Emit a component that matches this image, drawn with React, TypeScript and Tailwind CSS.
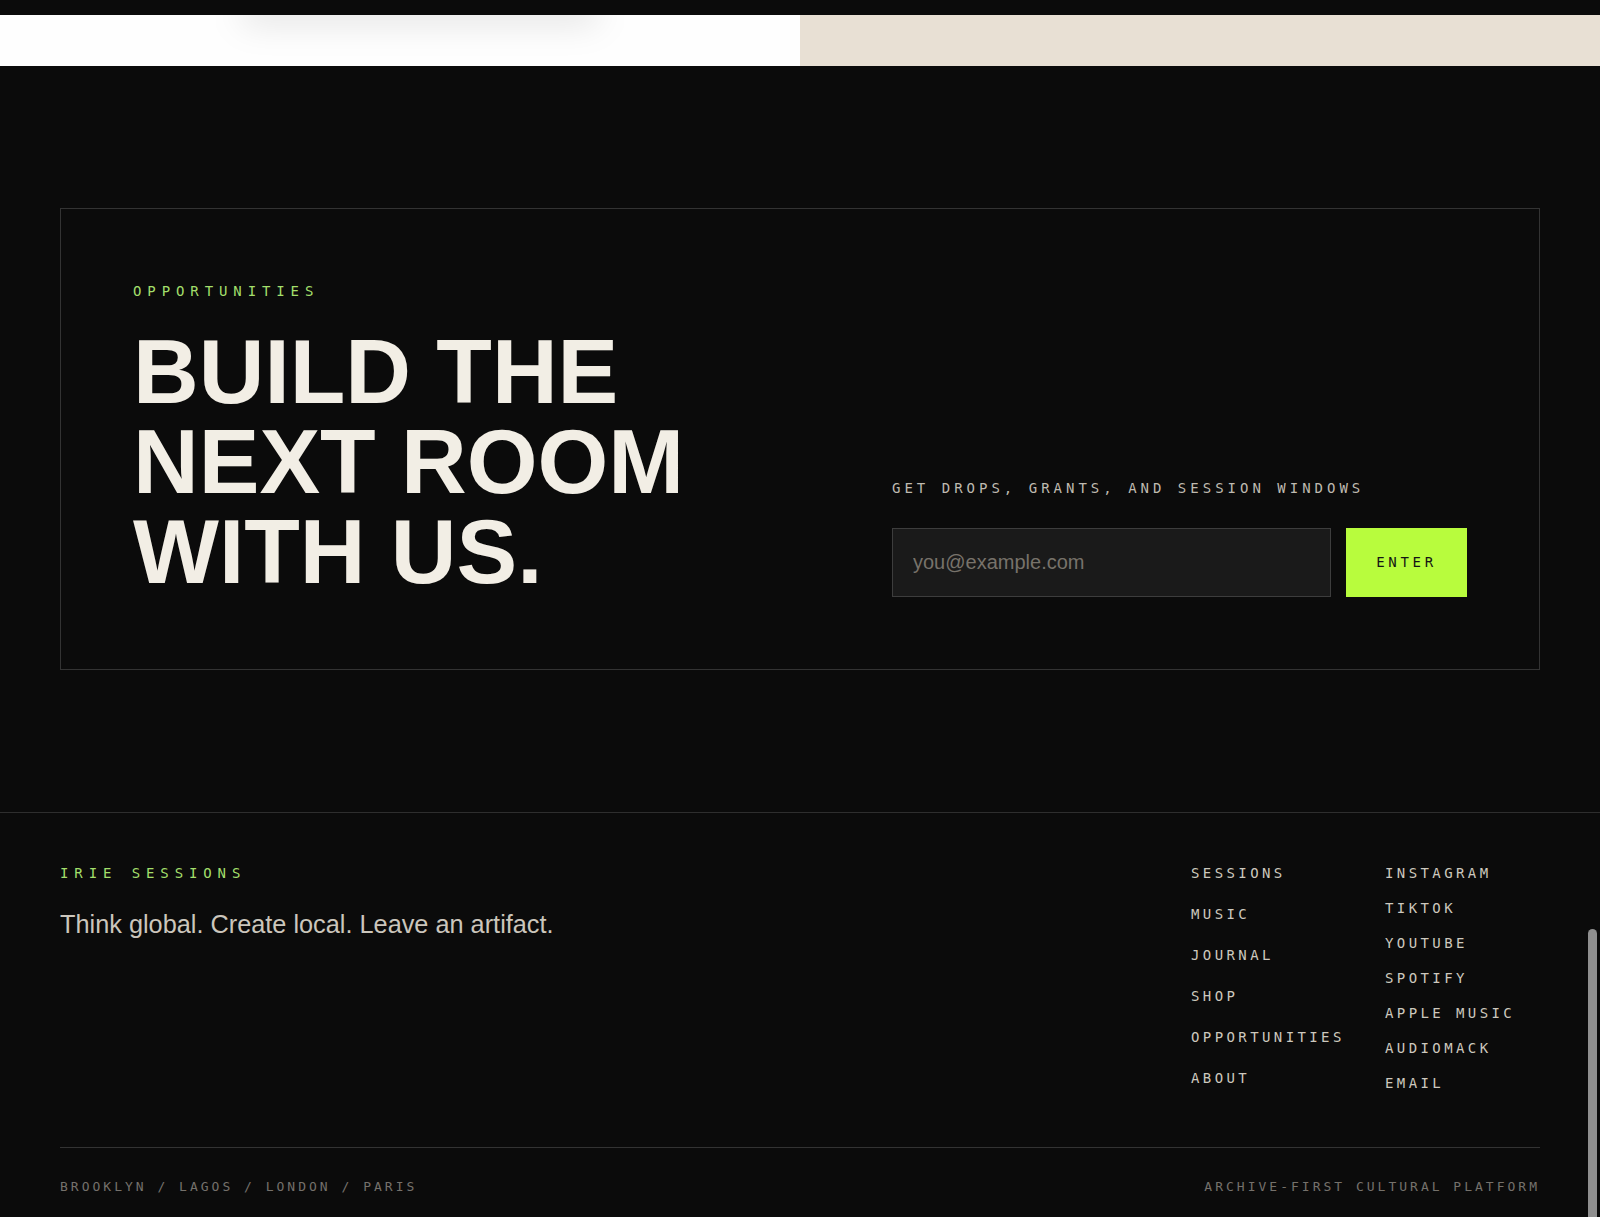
import React from 'react';

const mono = "font-['DejaVu_Sans_Mono','Liberation_Mono',monospace]";
const sans = "font-['Liberation_Sans',Arial,sans-serif]";

const siteLinks = ['Sessions', 'Music', 'Journal', 'Shop', 'Opportunities', 'About'];
const socialLinks = ['Instagram', 'TikTok', 'YouTube', 'Spotify', 'Apple Music', 'Audiomack', 'Email'];

const App: React.FC = () => {
  return (
    <div className={`relative h-[1217px] overflow-hidden bg-[#0b0b0b] ${sans}`}>
      {/* tail of the previous section */}
      <div className="h-[15px] bg-[#0b0b0b]" />
      <div className="grid grid-cols-2 h-[51px]">
        <div className="relative overflow-hidden bg-[#fefefe]">
          <div className="absolute left-[240px] top-[-16px] h-[26px] w-[360px] rounded-full bg-black/10 blur-lg" />
        </div>
        <div className="bg-[#e8e0d4]" />
      </div>

      {/* opportunities / newsletter */}
      <section className="px-[60px] py-[142px]">
        <div className="h-[462px] border border-[#333] px-[72px] py-[72px]">
          <div className="grid h-full grid-cols-[1fr_575px] items-end">
            <div className="self-start">
              <p className={`${mono} text-[14px] leading-[20px] tracking-[5.9px] text-[#a3df6b] uppercase`}>
                Opportunities
              </p>
              <h2 className="mt-[26px] text-[91px] font-bold leading-[90px] text-[#f2eee5] uppercase">
                Build the
                <br />
                next room
                <br />
                with us.
              </h2>
            </div>

            <div>
              <p className={`${mono} mb-[30px] text-[14px] leading-[20px] tracking-[4px] text-[#bfbab0] uppercase`}>
                Get drops, grants, and session windows
              </p>
              <form className="flex gap-[15px]" onSubmit={(e) => e.preventDefault()}>
                <input
                  type="email"
                  placeholder="you@example.com"
                  className="h-[69px] min-w-0 flex-1 border border-[#3d3d3d] bg-[#1a1a1a] px-[20px] text-[20px] text-[#f2eee5] outline-none placeholder:text-[#77726a]"
                />
                <button
                  type="submit"
                  className={`${mono} h-[69px] w-[121px] bg-[#b8fc3d] text-[14px] tracking-[3.7px] text-[#141414] uppercase`}
                >
                  Enter
                </button>
              </form>
            </div>
          </div>
        </div>
      </section>

      <footer className="border-t border-[#2e2e2e] px-[60px] pt-[50px]">
        <div className="flex items-start justify-between">
          <div>
            <p className={`${mono} text-[14px] leading-[20px] tracking-[5.9px] text-[#a3df6b] uppercase`}>
              Irie Sessions
            </p>
            <p className="mt-[25px] text-[25.3px] leading-[32px] text-[#cbc6bc]">
              Think global. Create local. Leave an artifact.
            </p>
          </div>

          <div className="flex">
            <ul className={`${mono} flex w-[194px] flex-col gap-[21px] text-[14px] leading-[20px] tracking-[3.4px] text-[#cdc8be] uppercase`}>
              {siteLinks.map((l) => (
                <li key={l}>
                  <a href="#">{l}</a>
                </li>
              ))}
            </ul>
            <ul className={`${mono} flex w-[155px] flex-col gap-[15px] text-[14px] leading-[20px] tracking-[3.4px] text-[#cdc8be] uppercase`}>
              {socialLinks.map((l) => (
                <li key={l}>
                  <a href="#">{l}</a>
                </li>
              ))}
            </ul>
          </div>
        </div>

        <div className={`${mono} mt-[54px] flex justify-between border-t border-[#333] pt-[30px] pb-[21px] text-[13px] leading-[18px] tracking-[3px] text-[#75716b] uppercase`}>
          <span>Brooklyn / Lagos / London / Paris</span>
          <span>Archive-first cultural platform</span>
        </div>
      </footer>

      {/* overlay scrollbar thumb */}
      <div className="absolute right-[3px] top-[929px] bottom-0 w-[9px] rounded-t-full bg-[#8f8f8f]" />
    </div>
  );
};

export default App;
